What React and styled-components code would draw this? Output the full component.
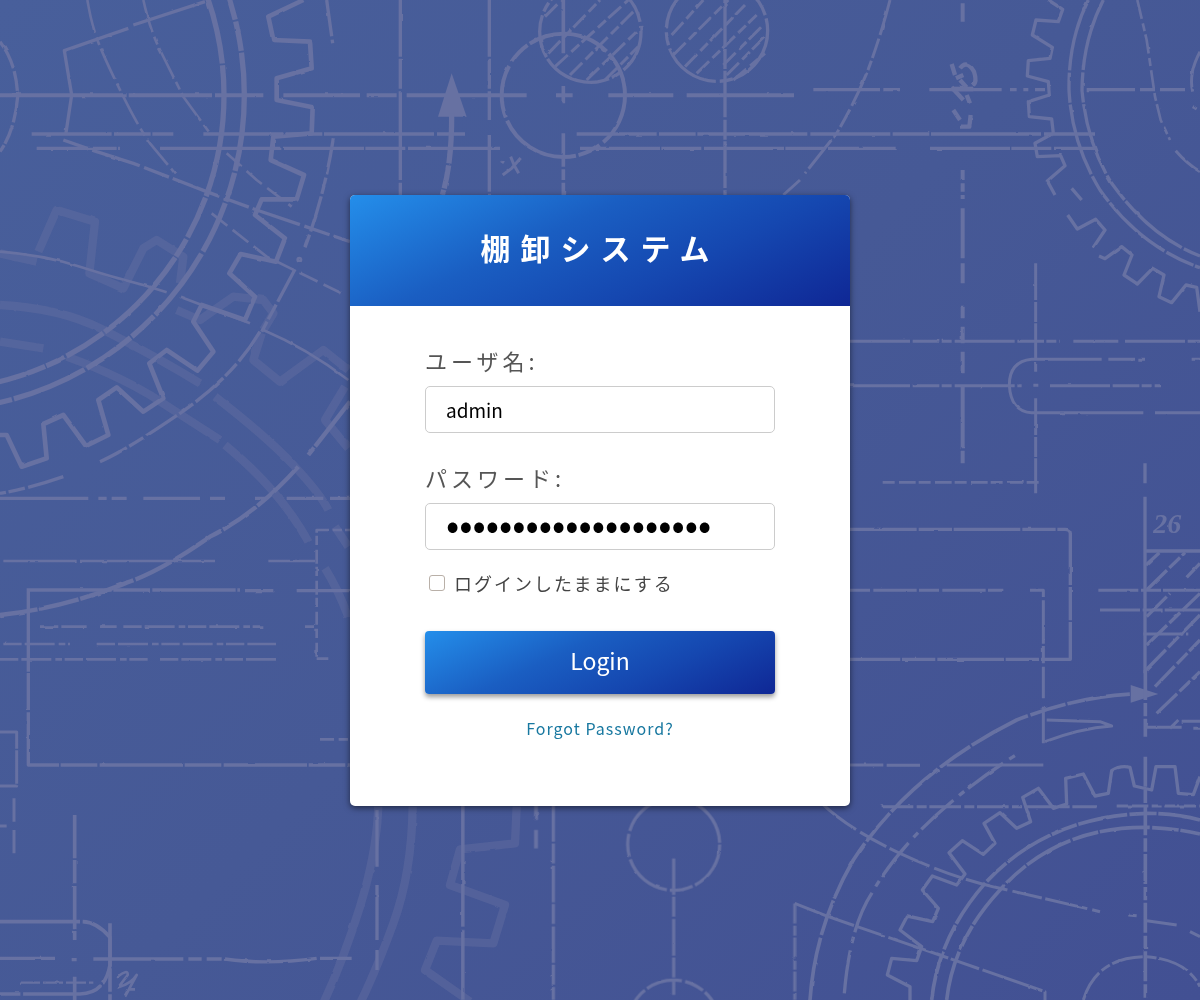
import React, { useState } from "react";
import styled, { createGlobalStyle, css } from "styled-components";

const GlobalStyle = createGlobalStyle`
  *, *::before, *::after { box-sizing: border-box; }
  body {
    margin: 0;
    font-family: "Noto Sans CJK JP", "Noto Sans", sans-serif;
    background: #465896;
  }
`;

const brandGradient = css`
  background: linear-gradient(155deg, #248eea 0%, #1a5ec2 38%, #1547b0 66%, #0f2795 100%);
`;

const Page = styled.main`
  display: grid;
  grid-template-columns: minmax(0, 1fr);
  min-height: 100vh;
  background: linear-gradient(135deg, #485f9b 0%, #465996 50%, #425093 100%);
`;

const Backdrop = styled.svg`
  grid-area: 1 / 1;
  width: 100%;
  height: 100%;
  min-height: 100vh;
  max-height: 100vh;
  fill: none;
  stroke: #6771a2;
  stroke-width: 10;
  stroke-linejoin: round;
`;

const Card = styled.section`
  grid-area: 1 / 1;
  place-self: center;
  position: relative;
  width: 100%;
  max-width: 500px;
  background: #fff;
  border-radius: 5px;
  box-shadow: 0 2px 6px rgba(0, 0, 0, 0.55);
`;

const Header = styled.header`
  ${brandGradient}
  padding: 30px 20px 37px;
  border-radius: 5px 5px 0 0;
`;

const Title = styled.h1`
  margin: 0;
  color: #fff;
  font-size: 30px;
  font-weight: 700;
  line-height: 44px;
  letter-spacing: 10px;
  text-align: center;
`;

const Form = styled.form`
  display: flex;
  flex-direction: column;
  padding: 38px 75px 65px;
`;

const Field = styled.div`
  display: flex;
  flex-direction: column;
  gap: 10px;
  margin-bottom: ${(p) => (p.$last ? "20px" : "28px")};
`;

const Label = styled.label`
  color: #555;
  font-size: 22px;
  line-height: 32px;
  letter-spacing: 4px;
`;

const Input = styled.input`
  width: 100%;
  height: 47px;
  padding: 0 20px;
  border: 1px solid #ccc;
  border-radius: 5px;
  background: #fff;
  color: #000;
  font-family: inherit;
  font-size: 19px;
  outline: none;
  &:focus { border-color: #1a5ec2; }
`;

const PasswordInput = styled(Input)`
  padding-bottom: 8px;
  font-size: 39px;
`;

const Remember = styled.label`
  display: flex;
  align-items: center;
  gap: 9px;
  padding-left: 4px;
  margin-bottom: 35px;
  color: #444;
  font-size: 18px;
  line-height: 26px;
  letter-spacing: 2px;
`;

const Checkbox = styled.input`
  appearance: none;
  width: 16px;
  height: 16px;
  margin: 0;
  border: 1px solid #b9b0a8;
  border-radius: 3px;
  background: #fff;
  &:checked { background: #1a5ec2; border-color: #1a5ec2; }
`;

const SubmitButton = styled.button`
  ${brandGradient}
  height: 63px;
  padding: 0 20px 5px;
  border: 0;
  border-radius: 4px;
  box-shadow: 0 3px 5px rgba(0, 0, 0, 0.4);
  color: #fff;
  font-family: inherit;
  font-size: 23px;
  cursor: pointer;
`;

const ForgotLink = styled.a`
  align-self: center;
  margin-top: 21px;
  color: #1878a0;
  font-size: 16px;
  line-height: 26px;
  letter-spacing: 1px;
  text-decoration: none;
`;

const D = ({ d, w, dash, o }) => (
  <path d={d} strokeWidth={w} strokeDasharray={dash} opacity={o} />
);

const Blueprint = () => (
  <Backdrop viewBox="0 0 3600 3000" preserveAspectRatio="xMidYMid slice" aria-hidden="true">
    <defs>
      {/* uneven chalk edge for the drafted lines */}
      <filter id="chalk" filterUnits="userSpaceOnUse" x="0" y="0" width="3600" height="3000" colorInterpolationFilters="sRGB">
        <feTurbulence type="fractalNoise" baseFrequency="0.03" numOctaves="2" seed="4" result="noise" />
        <feDisplacementMap in="SourceGraphic" in2="noise" scale="6" xChannelSelector="R" yChannelSelector="G" />
        <feGaussianBlur stdDeviation="2" />
      </filter>
    </defs>

    <g filter="url(#chalk)">
      {/* faint gear behind the left side */}
      <g strokeWidth="25" opacity="0.42">
        <path d="M0 760L110 785M115 755L170 630L285 665L268 820L370 865L430 745L470 720L550 770L540 850M530 930L600 960L700 890L790 900L820 940L790 990" />
        <path d="M0 915Q180 925 300 985Q470 1070 600 1150M645 1190Q800 1310 880 1395T985 1530M1005 1580L1045 1640" />
        <path d="M0 1025L130 1045M200 1070Q340 1120 450 1185L660 1320M675 1335Q840 1470 925 1625M975 1705Q1010 1760 1045 1850" />
        <path d="M785 1000L760 1080L840 1145L970 1050L1045 1110M1035 1160L975 1260L1045 1345" />
        <path d="M1135 2420Q1130 2560 1080 2720T970 3010M1238 2420Q1235 2620 1180 2770T1080 3010" />
        <path d="M1550 2420L1545 2530L1380 2548L1350 2655L1515 2715L1480 2830L1310 2822L1275 2910L1410 3005" />
      </g>

      {/* large gear at the top left */}
      <D w="14" d="M910 0L805 50L820 120L930 125L935 205L830 235L830 300L938 322L935 400L820 410L812 480L912 525L890 598L785 598L765 645L855 715L828 785L722 762L688 820L765 890L735 960L605 915L580 965L640 1055L592 1112L500 1050L448 1090L490 1195L430 1235L350 1162L295 1200L325 1305L258 1338L190 1245L130 1272L140 1375L65 1400L20 1305L0 1305" />
      <circle cx="-214" cy="285" r="886" strokeWidth="16" strokeDasharray="310 5 130 7 60 4" />
      <circle cx="-214" cy="285" r="947" strokeWidth="16" strokeDasharray="230 6 90 5 160 8" />
      <D w="10" dash="110 10 50 8" d="M980 0L998 130M1000 415Q975 580 915 742M885 808L785 995M780 995Q700 1130 540 1240T300 1385M190 1430Q90 1465 0 1480" />
      <circle cx="898" cy="779" r="4" />
      <D w="13" dash="170 5 120 7" d="M1050 1205L925 1365M895 1400Q770 1540 630 1610Q480 1715 380 1748Q190 1825 0 1845" />
      <D d="M0 125Q50 190 53 290Q45 390 0 455" dash="90 9 60 5" />
      <D w="10" d="M615 5L400 75M385 85L193 152L215 285L197 405" />
      <D w="8" dash="100 15 25 12" d="M262 0Q275 80 300 140T370 290T450 430L525 520M430 0Q450 90 480 150T550 290L630 400" />
      <D w="10" dash="80 12 150 14" d="M190 420L290 455L400 490L620 575L770 630L1050 725" />
      <D w="8" dash="60 20" d="M680 460L770 540L875 620M635 640L800 770L1025 880" />
      <D w="8" d="M0 755Q130 765 240 800T430 855L500 877M540 890L750 970M790 990Q920 1045 1045 1140" />

      {/* horizontal construction lines */}
      <D w="12" dash="380 6 250 9" d="M0 286H790M850 286H1080M1100 286H1190M1220 286H1580M1668 286H1718M1825 286H2020M2060 286H2382" />
      <D dash="240 7 110 5 330 9" d="M95 402H520M610 402H1395M1730 402H3285" />
      <D dash="240 4 120 8" d="M110 445H360M480 445H1500M1740 445H2690M2790 445H3285" />
      <D d="M0 1495H265M295 1495H320M335 1495H380M430 1495H600M630 1495H675M765 1495H800M860 1495H970M990 1495H1050" />
      <D w="8" d="M10 1683H230M240 1683H645M805 1683H945" />
      <D d="M85 1765V2295H1050M85 1770H720M735 1772H820M890 1772H1050" dash="250 5 110 7" />
      <D w="8" dash="55 9 90 12 20 8" d="M120 1880H260M300 1880H350M370 1880H790M915 1880H945M10 1932H210M290 1932H828M0 1978H445M480 1978H828" />
      <D w="8" dash="42 14 28 9" d="M950 1970V1590H1050M950 1976H985M960 2218H1050" />

      {/* bottom left slot and plates */}
      <D w="9" d="M0 2196H50V2358H0M42 2395V2465M42 2490V2560M0 2478H20" dash="100 5" />
      <D w="11" dash="130 5 70 8" d="M224 2445V2820M224 2930V3000M330 2770V3000" />
      <D w="11" d="M0 2765H245Q290 2765 330 2812V2895Q315 2980 240 2982H0" dash="240 8" />
      <D d="M0 2875H165M280 2877H550M565 2877H605M620 2877H665M675 2877Q800 2895 950 2875M960 2875H1055M215 2879H230" />
      <D w="7" d="M60 2948H280" dash="60 9" />
      <D w="8" d="M350 2932Q385 2905 383 2925L355 2962Q395 2950 410 2925L375 2990M385 2968H405" />
      <D w="10" d="M1131 2430V2600M1131 2655V2820M1131 2850V2910" />

      {/* top centre */}
      <D w="10" dash="170 6 90 8" d="M1201 0V585M1468 0V360M1468 405V585" />
      <D w="11" d="M1690 0V160M1690 258V310M1690 400V500M1690 508V540M1690 548V585" />
      <path d="M1355 220L1400 350H1314Z" fill="#6771a2" stroke="none" />
      <D w="16" d="M1355 340Q1356 490 1327 585" dash="150 6 70 5" />
      <circle cx="1690" cy="286" r="185" strokeWidth="12" strokeDasharray="160 14 70 8 250 10" />
      <circle cx="1771" cy="95" r="152" strokeDasharray="130 12 30 9 210 6" />
      <circle cx="2151" cy="92" r="152" strokeDasharray="180 10 40 12" />
      <D w="9" dash="52 14 32 10" d="M1635 50L1685 0M1645 160L1800 0M1665 200L1885 0M1710 225L1905 30M1760 240L1915 90M1815 240L1915 140M2015 105L2110 0M2020 165L2185 0M2055 200L2235 15M2090 220L2270 45M2170 195L2290 75M2180 225L2300 105M2200 240L2295 160" />
      <D w="10" d="M2175 0V585" dash="140 7 60 5" />
      <D w="9" d="M1503 482L1512 488M1532 470L1542 495L1556 520M1562 474L1535 505L1508 525" />
      <D w="9" d="M2670 0Q2650 80 2615 180T2510 400L2415 520M2400 540L2350 585" dash="110 12 60 9 30 8" />

      {/* top right gear */}
      <g transform="translate(2400 0)">
        <D w="10" d="M745 0L788 28L775 65L708 60L697 105L757 142L750 175L685 182L682 228L745 245L748 285L685 305L688 350L755 357L760 400L705 430L712 470L782 467L795 497L742 543L765 585M815 565L845 600M803 645L832 687L887 658L915 690L880 742M897 768L915 776L965 740L996 765L972 825L1012 852L1058 805L1092 825L1077 890L1115 908L1158 855L1190 862L1200 935" />
        <path d="M865 0Q805 120 807 270Q815 430 900 570Q1020 740 1200 803M910 0Q848 120 846 270Q860 430 935 550Q1050 710 1200 768" strokeDasharray="220 7 90 5" />
        <D w="8" dash="58 14 24 10" d="M1012 0L1040 120L1065 290L1082 360L1110 420" />
        <D w="9" d="M1127 452Q1160 490 1200 515M1200 155Q1165 220 1178 275M1178 320L1190 327" />
        <D w="10" d="M40 269H240M250 269H300M388 269H605M630 269H650M670 269H685M705 269H735M860 269H1005M1020 269H1065M1080 269H1155" />
        <D w="12" d="M488 10V65M488 510V540M488 550V575M488 585V597M488 625V775M488 790V850M488 920V955M488 980V1030M488 1055V1120M488 1160V1345M488 1352V1390" />
        <D w="9" dash="110 6 60 4" d="M707 790V1115M707 1195V1480" />
        <D w="13" d="M455 192L465 225M480 205Q500 178 522 215Q532 245 520 255M468 235L490 225M480 240L500 262M500 285L510 310M455 262L490 300M460 330L480 360M482 380H508L512 345" />
        <D w="14" d="M455 267H520" />
      </g>

      {/* right middle */}
      <g transform="translate(2400 990)">
        <D w="9" dash="180 8 80 7 30 9" d="M150 34H780M820 34H955M975 34H1200M150 167H665M700 166H715M750 167H1080" />
        <D w="9" d="M905 88H695Q628 95 628 165Q632 245 695 248H1030M925 88H1005M1015 88H1035M1065 248H1200M1175 88H1200" />
        <D w="8" dash="36 13 50 9" d="M248 457H720" />
        <D w="10" dash="200 6 100 5" d="M150 598H795Q810 598 811 610V988H150" />
        <D w="9" dash="60 10 130 7" d="M150 781H610M690 781H730V1000" />
        <D w="9" d="M730 1010V1105M730 1130V1240" />
        <D w="10" d="M1035 400V460M1035 500V1030M1035 663H1200" />
        <D w="9" d="M895 781H1200M900 840H1200M1030 912H1165" dash="120 8 60 6" />
        <D w="10" dash="85 10 45 8" d="M1038 705L1078 668M1040 780L1155 668M1160 742L1200 700M1040 860L1110 790M1040 945L1200 790M1038 1020L1200 855M1065 1070L1200 930M1070 1150L1200 1025" />
        <text x="1060" y="609" fill="#6771a2" stroke="none" fontFamily="Liberation Serif, serif" fontStyle="italic" fontWeight="700" fontSize="84">26</text>
      </g>

      {/* bottom centre */}
      <g transform="translate(1200 2340)">
        <D w="11" d="M188 70V440M188 450V660" />
        <D w="12" d="M408 70V120M408 150V205" />
        <D w="10" dash="110 5 60 7" d="M460 75V660M821 235V645" />
        <circle cx="821" cy="193" r="138" strokeDasharray="150 8 70 9" />
        <circle cx="821" cy="738" r="138" strokeDasharray="110 10 60 8" />
        <D w="9" dash="60 7 30 5" d="M1184 370V660" />
      </g>

      {/* bottom right gear */}
      <g transform="translate(2400 2010)">
        <D w="10" d="M330 990L330 950L262 915L275 865L350 872L365 830L300 780L322 738L398 755L415 715L367 660L397 618L470 645L495 612L447 548L487 512L550 553L585 520L552 460L600 428L650 475L692 455L668 382L715 355L760 415L800 402L797 325L850 312L885 378L925 370L935 302Q960 285 990 292L1003 348L1055 360L1068 290L1125 290L1135 370L1180 374L1200 320" />
        <D w="11" dash="190 8 110 6" d="M30 990Q45 770 160 570Q330 310 650 150Q830 80 1000 72" />
        <path d="M992 45L1075 72L992 98Z" fill="#6771a2" stroke="none" />
        <D dash="130 22 20 14" d="M133 970Q150 770 215 670Q340 450 655 250" />
        <D w="9" d="M735 215Q840 175 935 168L900 155L740 150" />
        <D w="11" dash="150 7 80 5" d="M395 990Q415 800 555 640Q740 440 1040 430Q1130 430 1200 450M440 990Q460 810 600 660Q770 470 1040 472Q1130 475 1200 492" />
        <D w="9" dash="130 15 90 11" d="M65 400Q150 480 300 550T580 650T900 725M985 735L1010 737M1040 752L1130 765M1170 785L1200 800" />
        <D w="9" dash="190 8 90 11" d="M-16 700L85 740L370 838L735 965V990" />
        <D w="9" dash="95 10 30 8" d="M850 990Q890 860 1040 860Q1160 870 1200 950M245 410H890M950 408H1200" />
        <D w="9" d="M150 285H250M260 286H360M440 285H730" />
        <D w="11" dash="90 9 40 7" d="M1036 0V200M1036 260V990" />
        <D w="9" d="M1038 172H1145M1145 154H1200M1038 172L1040 158M1180 175H1200M1110 175L1135 150" />
      </g>
    </g>
  </Backdrop>
);

export default function App() {
  const [user, setUser] = useState("admin");
  const [password, setPassword] = useState("inventory-system-pwd");

  return (
    <>
      <GlobalStyle />
      <Page>
        <Blueprint />
        <Card>
          <Header>
            <Title>棚卸システム</Title>
          </Header>
          <Form onSubmit={(e) => e.preventDefault()}>
            <Field>
              <Label htmlFor="username">ユーザ名:</Label>
              <Input id="username" type="text" value={user} onChange={(e) => setUser(e.target.value)} />
            </Field>
            <Field $last>
              <Label htmlFor="password">パスワード:</Label>
              <PasswordInput id="password" type="password" value={password} onChange={(e) => setPassword(e.target.value)} />
            </Field>
            <Remember htmlFor="remember">
              <Checkbox id="remember" type="checkbox" />
              ログインしたままにする
            </Remember>
            <SubmitButton type="submit">Login</SubmitButton>
            <ForgotLink href="#forgot">Forgot Password?</ForgotLink>
          </Form>
        </Card>
      </Page>
    </>
  );
}
